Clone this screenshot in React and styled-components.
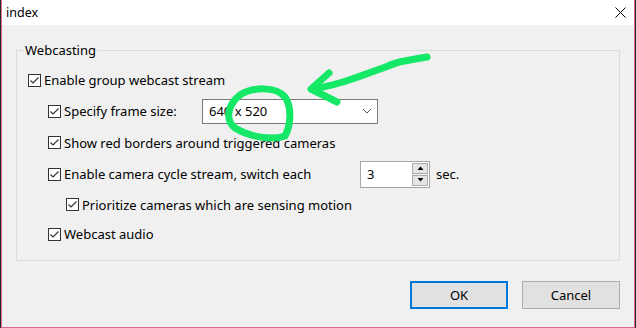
import React from "react";
import styled, { createGlobalStyle } from "styled-components";

const GlobalStyle = createGlobalStyle`
  html, body {
    margin: 0;
    padding: 0;
    background: #2b2b2b;
  }
  body {
    font-family: "Noto Sans", "Open Sans", sans-serif;
    font-size: 13px;
    color: #000;
  }
`;

const indent = [11, 31, 49];

const Screen = styled.div`
  position: relative;
  width: 636px;
  height: 328px;
  overflow: hidden;
`;

const Window = styled.div`
  margin-left: 1px;
  width: 634px;
  height: 328px;
  box-sizing: border-box;
  border: 1px solid #dc6b8b;
  border-top: none;
  background: #f0f0f0;
  display: flex;
  flex-direction: column;
`;

const TitleBar = styled.div`
  height: 25px;
  background: #fff;
  display: flex;
  align-items: center;
  justify-content: space-between;
  padding: 0 8px 0 4px;
`;

const Title = styled.span`
  font-size: 12.5px;
  line-height: 16px;
`;

const Body = styled.div`
  flex: 1;
  padding: 25px 14px 0 14px;
  display: flex;
  flex-direction: column;
`;

const Group = styled.div`
  height: 211px;
  box-sizing: border-box;
  border: 1px solid #dcdcdc;
`;

const Legend = styled.div`
  width: max-content;
  margin: -9px 0 0 7px;
  padding: 0 1px;
  line-height: 16px;
  background: #f0f0f0;
`;

const List = styled.div`
  padding-top: 7px;
  display: flex;
  flex-direction: column;
  gap: 1px;
`;

const Row = styled.div`
  height: ${(p) => p.$h || 30}px;
  display: flex;
  align-items: center;
  padding-left: ${(p) => indent[p.$level]}px;
`;

const CheckLabel = styled.label`
  display: flex;
  align-items: center;
  gap: 3px;
  width: ${(p) => (p.$width ? `${p.$width}px` : "auto")};
  white-space: nowrap;
`;

const Box = styled.span`
  width: 13px;
  height: 13px;
  flex: none;
  box-sizing: border-box;
  border: 1px solid #333;
  background: #fff;
  display: inline-flex;
  align-items: center;
  justify-content: center;
`;

const Combo = styled.div`
  width: 176px;
  height: 25px;
  box-sizing: border-box;
  border: 1px solid #7a7a7a;
  background: #fff;
  display: flex;
  align-items: center;
  justify-content: space-between;
  padding: 0 5px 0 6px;
`;

const Spin = styled.div`
  width: 70px;
  height: 27px;
  box-sizing: border-box;
  border: 1px solid #a6a6a6;
  background: #fff;
  display: flex;
  align-items: center;
  justify-content: space-between;
  padding: 0 1px 0 6px;
  margin-right: 6px;
`;

const SpinButtons = styled.div`
  display: flex;
  flex-direction: column;
  gap: 1px;
  background: #f0f0f0;
`;

const SpinButton = styled.div`
  width: 16px;
  height: 11px;
  box-sizing: border-box;
  border: 1px solid #adadad;
  background: #e5e5e5;
  display: flex;
  align-items: center;
  justify-content: center;
`;

const Footer = styled.div`
  margin-top: 20px;
  display: flex;
  justify-content: flex-end;
  gap: 14px;
`;

const Button = styled.button`
  width: 98px;
  height: 28px;
  box-sizing: border-box;
  font: inherit;
  color: #000;
  background: #e1e1e1;
  border: ${(p) => (p.$primary ? "2px solid #0078d7" : "1px solid #adadad")};
  padding: 0;
`;

const Overlay = styled.svg`
  position: absolute;
  inset: 0;
  pointer-events: none;
`;

const Check = () => (
  <Box>
    <svg width="11" height="11" viewBox="0 0 11 11">
      <polyline points="1.5,5.5 4,8 9.5,2.5" fill="none" stroke="#333" strokeWidth="1.2" />
    </svg>
  </Box>
);

const CheckItem = ({ children, width }) => (
  <CheckLabel $width={width}>
    <Check />
    {children}
  </CheckLabel>
);

const Triangle = ({ up }) => (
  <svg width="7" height="4" viewBox="0 0 7 4">
    <polygon points={up ? "0.5,4 3.5,0.5 6.5,4" : "0.5,0 3.5,3.5 6.5,0"} fill="#000" />
  </svg>
);

const App = () => {
  return (
    <Screen>
      <GlobalStyle />
      <Window>
        <TitleBar>
          <Title>index</Title>
          <svg width="11" height="11" viewBox="0 0 11 11">
            <path d="M0.5 0.5 L10.5 10.5 M10.5 0.5 L0.5 10.5" stroke="#000" strokeWidth="1" />
          </svg>
        </TitleBar>
        <Body>
          <Group>
            <Legend>Webcasting</Legend>
            <List>
              <Row $level={0}>
                <CheckItem>Enable group webcast stream</CheckItem>
              </Row>
              <Row $level={1}>
                <CheckItem width={154}>Specify frame size:</CheckItem>
                <Combo>
                  <span>640 x 520</span>
                  <svg width="10" height="6" viewBox="0 0 10 6">
                    <polyline points="1,1 5,5 9,1" fill="none" stroke="#555" strokeWidth="1" />
                  </svg>
                </Combo>
              </Row>
              <Row $level={1} $h={31}>
                <CheckItem>Show red borders around triggered cameras</CheckItem>
              </Row>
              <Row $level={1}>
                <CheckItem width={312}>Enable camera cycle stream, switch each</CheckItem>
                <Spin>
                  <span>3</span>
                  <SpinButtons>
                    <SpinButton>
                      <Triangle up />
                    </SpinButton>
                    <SpinButton>
                      <Triangle />
                    </SpinButton>
                  </SpinButtons>
                </Spin>
                <span>sec.</span>
              </Row>
              <Row $level={2} $h={29}>
                <CheckItem>Prioritize cameras which are sensing motion</CheckItem>
              </Row>
              <Row $level={1} $h={28}>
                <CheckItem>Webcast audio</CheckItem>
              </Row>
            </List>
          </Group>
          <Footer>
            <Button $primary>OK</Button>
            <Button>Cancel</Button>
          </Footer>
        </Body>
      </Window>
      <Overlay width="636" height="328" viewBox="0 0 636 328">
        <g fill="none" stroke="#14e866" strokeWidth="7" strokeLinecap="round" strokeLinejoin="round">
          <path d="M427 57 C410 60 398 61 388 66 C375 71 366 74 352 79 C338 84 325 87 312 89" />
          <path d="M329 73 L311 89 L337 102" />
          <path d="M240 95 C252 87 276 86 285 97 C292 107 291 125 285 136 C270 141 248 136 235 128 C226 121 226 106 240 95 Z" />
        </g>
      </Overlay>
    </Screen>
  );
};

export default App;
